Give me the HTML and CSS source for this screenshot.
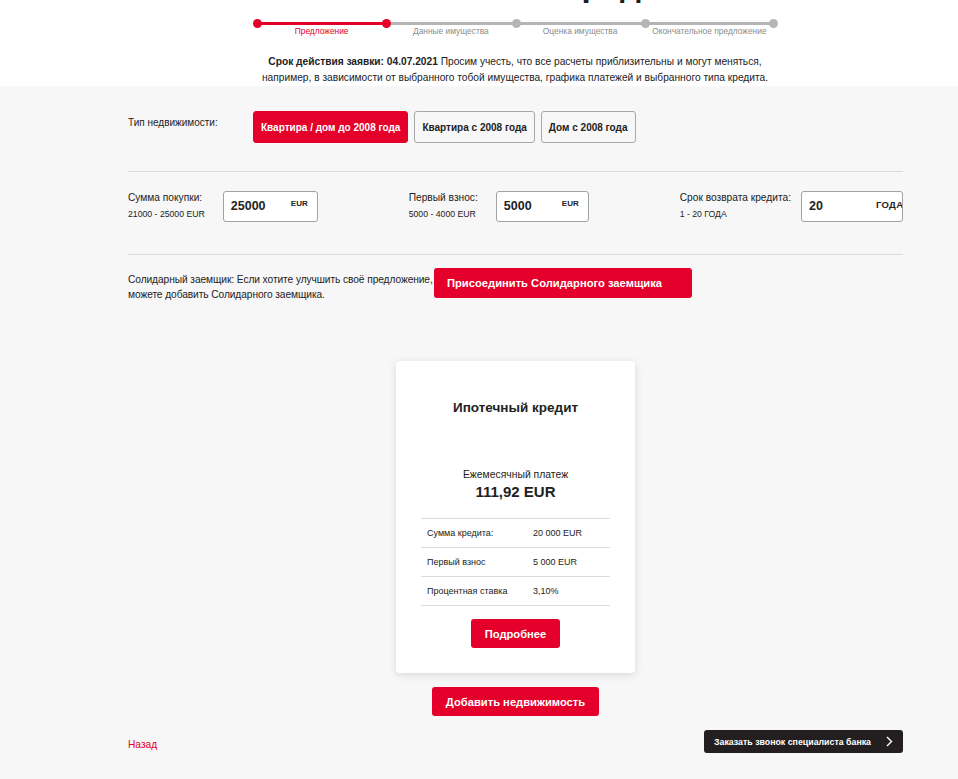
FILE: index.html
```html
<!DOCTYPE html>
<html lang="ru">
<head>
  <meta charset="UTF-8">
  <title>Ипотечный кредит</title>
  <link rel="stylesheet" href="styles.css">
</head>
<body>
  <header class="top">
    <h1 class="page-title">Ипотечный кредит</h1>
    <ol class="steps">
      <li class="done">Предложение</li>
      <li>Данные имущества</li>
      <li>Оценка имущества</li>
      <li>Окончательное предложение</li>
    </ol>
    <p class="notice">
      <b>Срок действия заявки: 04.07.2021</b> Просим учесть, что все расчеты приблизительны и могут меняться,<br>
      например, в зависимости от выбранного тобой имущества, графика платежей и выбранного типа кредита.
    </p>
  </header>

  <main class="calc">
    <div class="wrap">
      <section class="type-row">
        <span class="type-label">Тип недвижимости:</span>
        <div class="type-options">
          <button class="opt active">Квартира / дом до 2008 года</button>
          <button class="opt">Квартира с 2008 года</button>
          <button class="opt">Дом с 2008 года</button>
        </div>
      </section>

      <hr class="sep">

      <section class="fields">
        <div class="field">
          <div class="field-text">
            <span class="field-label">Сумма покупки:</span>
            <span class="field-range">21000 - 25000 EUR</span>
          </div>
          <div class="field-box">
            <span class="field-value">25000</span>
            <span class="field-unit">EUR</span>
          </div>
        </div>
        <div class="field">
          <div class="field-text">
            <span class="field-label">Первый взнос:</span>
            <span class="field-range">5000 - 4000 EUR</span>
          </div>
          <div class="field-box small">
            <span class="field-value">5000</span>
            <span class="field-unit">EUR</span>
          </div>
        </div>
        <div class="field tight">
          <div class="field-text">
            <span class="field-label">Срок возврата кредита:</span>
            <span class="field-range">1 - 20 ГОДА</span>
          </div>
          <div class="field-box wide">
            <span class="field-value">20</span>
            <span class="field-unit">ГОДА</span>
          </div>
        </div>
      </section>

      <hr class="sep">

      <section class="cosigner">
        <p>Солидарный заемщик: Если хотите улучшить своё предложение, можете добавить Солидарного заемщика.</p>
        <button class="btn-red join">Присоединить Солидарного заемщика</button>
      </section>

      <section class="offer">
        <div class="card">
          <h2>Ипотечный кредит</h2>
          <div class="monthly">
            <span>Ежемесячный платеж</span>
            <strong>111,92 EUR</strong>
          </div>
          <table class="details">
            <tr><td>Сумма кредита:</td><td>20 000 EUR</td></tr>
            <tr><td>Первый взнос</td><td>5 000 EUR</td></tr>
            <tr><td>Процентная ставка</td><td>3,10%</td></tr>
          </table>
          <button class="btn-red more">Подробнее</button>
        </div>
        <button class="btn-red add">Добавить недвижимость</button>
      </section>

      <footer class="bottom">
        <a href="#" class="back">Назад</a>
        <button class="call">Заказать звонок специалиста банка
          <svg width="7" height="11" viewBox="0 0 7 11"><path d="M1 1l4.5 4.5L1 10" fill="none" stroke="#fff" stroke-width="1.4"/></svg>
        </button>
      </footer>
    </div>
  </main>
</body>
</html>
```

FILE: styles.css
```css
body {
  margin: 0;
  font-family: "Liberation Sans", Arial, sans-serif;
  color: #222;
  background-color: #f7f7f7;
}
button {
  font-family: inherit;
  cursor: pointer;
}
.top {
  background-color: #fff;
  overflow: hidden;
}
.page-title {
  margin: -33px 0 0 91px;
  font-size: 33px;
  line-height: 36px;
  text-align: center;
  color: #1d1d26;
}
.steps {
  list-style: none;
  display: grid;
  grid-template-columns: repeat(4, 1fr);
  width: 517px;
  margin: 19px auto 0 257px;
  padding: 0;
  position: relative;
}
.steps li {
  position: relative;
  border-top: 3px solid #b5b5b5;
  padding-top: 1px;
  font-size: 8.4px;
  line-height: 11px;
  text-align: center;
  color: #8c8c8c;
}
.steps li::before,
.steps::after {
  content: "";
  position: absolute;
  top: -6px;
  left: -4px;
  width: 9px;
  height: 9px;
  border-radius: 50%;
  background-color: #b5b5b5;
}
.steps::after {
  top: -3px;
  left: auto;
  right: -4px;
}
.steps li.done {
  border-top-color: #e4002b;
  color: #e4002b;
}
.steps li.done::before,
.steps li.done + li::before {
  background-color: #e4002b;
}
.notice {
  margin: 17px 0 0 72px;
  font-size: 10.2px;
  line-height: 16px;
  text-align: center;
}
.calc {
  padding: 25px 0 30px;
}
.wrap {
  width: 775px;
  margin-left: 128px;
}
.type-row {
  display: flex;
}
.type-label {
  width: 125px;
  flex: none;
  margin-top: 5px;
  font-size: 10px;
  line-height: 14px;
}
.type-options {
  display: flex;
  gap: 6px;
}
.opt {
  height: 32px;
  padding: 0 7px;
  font-size: 10px;
  font-weight: bold;
  color: #222;
  background-color: #f7f7f7;
  border: 1px solid #a7a7a7;
  border-radius: 3px;
}
.opt.active {
  background-color: #e4002b;
  border-color: #e4002b;
  color: #fff;
}
.sep {
  border: none;
  border-top: 1px solid #dcdcdc;
  margin: 28px 0 0;
}
.fields {
  display: flex;
  justify-content: space-between;
  margin-top: 19px;
}
.field {
  display: flex;
  gap: 18px;
}
.field.tight {
  gap: 10px;
}
.field-text {
  display: flex;
  flex-direction: column;
  gap: 2px;
}
.field-label {
  font-size: 10.2px;
  line-height: 14px;
}
.field-range {
  font-size: 8.7px;
  line-height: 14px;
}
.field-box {
  display: flex;
  width: 95px;
  height: 31px;
  box-sizing: border-box;
  border: 1px solid #a2a2a2;
  border-radius: 3px;
  background-color: #fff;
  overflow: hidden;
}
.field-box.small {
  width: 93px;
}
.field-box.wide {
  width: 102px;
}
.field-value {
  flex: 1;
  padding-left: 7px;
  font-size: 12.5px;
  font-weight: bold;
  line-height: 29px;
}
.field-unit {
  flex: none;
  width: 17px;
  margin: 7px 9px 0 0;
  font-size: 8px;
  font-weight: bold;
  white-space: nowrap;
}
.field-box.wide .field-unit {
  font-size: 9.5px;
  letter-spacing: 0.3px;
}
.sep + .cosigner {
  margin-top: 13px;
}
.fields + .sep {
  margin-top: 32px;
}
.cosigner {
  display: flex;
  align-items: flex-start;
}
.cosigner p {
  flex: 0 0 306px;
  margin: 4px 0 0;
  font-size: 10.2px;
  line-height: 15px;
  letter-spacing: -0.08px;
}
.btn-red {
  background-color: #e4002b;
  color: #fff;
  border: none;
  border-radius: 3px;
  font-weight: bold;
  font-size: 11.2px;
}
.join {
  width: 258px;
  height: 30px;
  padding: 0 0 0 13px;
  text-align: left;
}
.offer {
  display: flex;
  flex-direction: column;
  align-items: center;
  margin-top: 59px;
}
.card {
  width: 239px;
  box-sizing: border-box;
  padding: 38px 25px 25px;
  background-color: #fff;
  border-radius: 4px;
  box-shadow: 0 2px 9px rgba(0, 0, 0, 0.12);
  text-align: center;
}
.card h2 {
  margin: 0;
  font-size: 13.5px;
  line-height: 17px;
}
.monthly {
  display: flex;
  flex-direction: column;
  margin-top: 52px;
}
.monthly span {
  font-size: 10.4px;
  line-height: 14px;
}
.monthly strong {
  font-size: 15px;
  line-height: 20px;
}
.details {
  width: 100%;
  margin-top: 16px;
  border-collapse: collapse;
  border-top: 1px solid #dcdcdc;
  text-align: left;
  font-size: 9px;
}
.details td {
  height: 28px;
  padding: 0 0 0 6px;
  border-bottom: 1px solid #dcdcdc;
}
.details td:first-child {
  width: 100px;
}
.more {
  width: 89px;
  height: 29px;
  margin-top: 13px;
}
.add {
  width: 167px;
  height: 29px;
  margin-top: 14px;
}
.bottom {
  display: flex;
  justify-content: space-between;
  align-items: flex-start;
  margin-top: 14px;
}
.back {
  margin-top: 9px;
  color: #e4002b;
  font-size: 10.2px;
  text-decoration: none;
}
.call {
  display: flex;
  align-items: center;
  gap: 15px;
  height: 23px;
  padding: 0 10px 0 10px;
  background-color: #231f20;
  color: #fff;
  border: none;
  border-radius: 3px;
  font-size: 8.8px;
  font-weight: bold;
}
```
